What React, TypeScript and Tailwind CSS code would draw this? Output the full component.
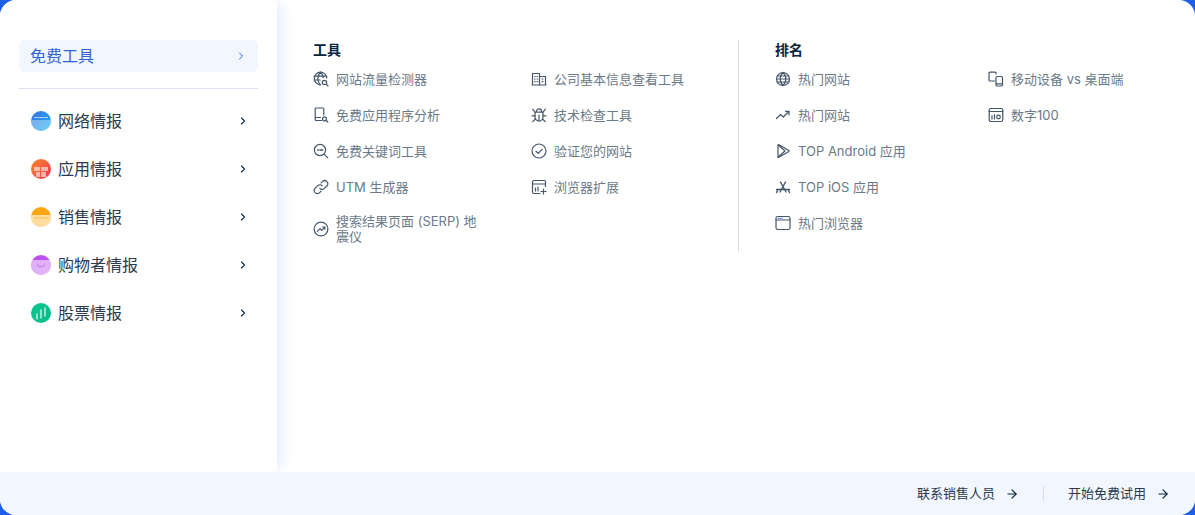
import React from "react";
import { ChevronRight, ArrowRight } from "lucide-react";

const S = ({ children }: { children: React.ReactNode }) => (
  <svg width="16" height="16" viewBox="0 0 16 16" fill="none" stroke="#44566a" strokeWidth="1.2" strokeLinecap="round" strokeLinejoin="round" className="shrink-0">
    {children}
  </svg>
);

const icons: Record<string, React.ReactNode> = {
  globeSearch: (<S><path d="M13.8 7A6.3 6.3 0 1 0 7 13.8" /><path d="M1.2 5.2h12M1.2 9h6M7.5 1.2C5.5 3 4.8 5.2 4.8 7.5s.7 4.5 2.7 6.3M7.5 1.2c1.7 1.5 2.5 3.4 2.7 5.5" /><circle cx="11.5" cy="11.5" r="2.2" /><path d="M13.2 13.2l1.8 1.8" /></S>),
  appSearch: (<S><path d="M8.5 13.5H3.2a1 1 0 0 1-1-1V2a1 1 0 0 1 1-1h6.6a1 1 0 0 1 1 1v6" /><path d="M2.5 10.5H7.5" /><circle cx="11.5" cy="11.8" r="2" /><path d="M13 13.3l1.8 1.7" /></S>),
  keyword: (<S><circle cx="7" cy="7" r="5.6" /><path d="M11.2 11.2l3.6 3.6" /><path d="M4.6 7h.6M6.8 7h3" strokeWidth="1.4" /></S>),
  link: (<S><path d="M6.8 9.4a3 3 0 0 0 4.4.2l2.6-2.6a3.1 3.1 0 0 0-4.4-4.4L8 3.9" /><path d="M9.2 6.8a3 3 0 0 0-4.4-.2L2.2 9.2a3.1 3.1 0 0 0 4.4 4.4l1.4-1.3" /></S>),
  serp: (<S><circle cx="8" cy="8" r="6.9" /><path d="M4.3 10.4l2.7-2.7 1.7 1.6 3-3.1" /><path d="M9.6 6h2.3v2.3" /></S>),
  building: (<S><path d="M1.5 14V2.5h7V14M8.5 5.5h6V14M1 14h14" /><path d="M3.6 5.5h.6M6 5.5h.6M3.6 8h.6M6 8h.6M3.6 10.6h.6M6 10.6h.6M11 8h1M11 10.6h1" /></S>),
  bug: (<S><path d="M5.4 4.5a2.6 2.6 0 0 1 5.2 0" /><path d="M5 5.2h6a1 1 0 0 1 1 1V10a4 4 0 0 1-8 0V6.2a1 1 0 0 1 1-1z" /><path d="M8 8v6M1.6 2.2l2.6 3.2M14.4 2.2l-2.6 3.2M1 8.8h3M15 8.8h-3M1.8 14.6L4.4 12M14.2 14.6L11.6 12" /></S>),
  check: (<S><circle cx="8" cy="8" r="7" /><path d="M5 8.2l2.2 2.1 3.9-4" /></S>),
  ext: (<S><path d="M14.5 7.5V3a1.5 1.5 0 0 0-1.5-1.5H3A1.5 1.5 0 0 0 1.500 3v10A1.500 1.500 0 0 0 3 14.500h6" /><path d="M1.500 5h13M4.500 12V9M7 12V8M12.500 10v5M10 12.500h5" /></S>),
  globe: (<S><circle cx="8" cy="8" r="6.500" /><path d="M1.500 8h13M2.300 5h11.400M2.300 11h11.400M8 1.500c-2 1.800-2.800 4-2.800 6.500s.8 4.700 2.800 6.500M8 1.500c2 1.800 2.800 4 2.800 6.500s-.8 4.700-2.800 6.500" /></S>),
  trend: (<S><path d="M1.500 11.500l4-4 2.800 2.500 5.500-5.500" /><path d="M10.500 4.300h3.500v3.500" /></S>),
  play: (<S><path d="M3 2.200v11.600a.6.600 0 0 0 .9.500l10-5.800a.6.600 0 0 0 0-1L3.900 1.700a.6.600 0 0 0-.9.500z" /><path d="M3.200 2l6.800 6-6.800 6" /></S>),
  appstore: (<S><path d="M5.500 3L11 13M10.500 3L5 13M1.500 10.500h13M1.500 13.500l1.500-3M14.500 13.500l-1.500-3" strokeWidth="1.400" /></S>),
  browser: (<S><rect x="1" y="1.500" width="14" height="13" rx="1.800" /><path d="M1 5h14" /><path d="M3.200 3.300h.4M5 3.300h.4M6.800 3.300h.4" stroke="#4a7de0" /></S>),
  device: (<S><path d="M8 3V2.200A1 1 0 0 0 7 1.200H2a1 1 0 0 0-1 1V9a1 1 0 0 0 1 1h4.500" /><rect x="8" y="5.500" width="6.500" height="9.500" rx="1.200" /><path d="M8 12.800h6.500" /></S>),
  top100: (<S><rect x="1.200" y="1.500" width="13.600" height="13" rx="1.800" /><path d="M1.200 4.500h13.600M4 12V8.500M6.500 12V7.500" /><circle cx="10.500" cy="10" r="1.800" /></S>),
};

const FF = "font-['Inter','Noto_Sans_CJK_SC',sans-serif]";

function Item({ icon, label, wide }: { icon: string; label: string; wide?: boolean }) {
  return (
    <a className="flex items-center gap-[7px] min-h-[36px] h-fit">
      {icons[icon]}
      <span className={`text-[13px] leading-[15px] text-[#6b7a88] ${wide ? "w-[150px]" : ""}`}>{label}</span>
    </a>
  );
}

const Dot = ({ c1, c2, children }: { c1: string; c2: string; children?: React.ReactNode }) => (
  <span className="w-5 h-5 rounded-full overflow-hidden shrink-0" style={{ background: `linear-gradient(135deg, ${c1}, ${c2})` }}>
    <svg width="20" height="20" viewBox="0 0 20 20">{children}</svg>
  </span>
);

const nav: { label: string; dot: React.ReactNode }[] = [
  {
    label: "网络情报",
    dot: (
      <Dot c1="#3f6fe8" c2="#18b6ee">
        <path d="M0 9h20v11H0z" fill="#ffffff" opacity=".35" />
        <path d="M3 6.500h14" stroke="#fff" strokeWidth="1" opacity=".6" />
      </Dot>
    ),
  },
  {
    label: "应用情报",
    dot: (
      <Dot c1="#fb8a2c" c2="#f0344f">
        <path d="M3 8h6v4H3zM10 8h7v4h-7zM5 13h4v5H5zM10 13h5v5h-5z" fill="#ffd9d0" opacity=".75" />
      </Dot>
    ),
  },
  {
    label: "销售情报",
    dot: (
      <Dot c1="#ffa712" c2="#ffa712">
        <path d="M0 8h20v12H0z" fill="#fff" opacity=".6" />
        <path d="M3 11h14" stroke="#ffa712" strokeWidth=".8" opacity=".7" />
      </Dot>
    ),
  },
  {
    label: "购物者情报",
    dot: (
      <Dot c1="#b94bef" c2="#c05cf0">
        <path d="M0 5h20v15H0z" fill="#fff" opacity=".55" />
        <path d="M6.500 8.500a3.500 3.500 0 0 0 7 0" stroke="#c77af0" fill="none" strokeWidth="1" />
      </Dot>
    ),
  },
  {
    label: "股票情报",
    dot: (
      <Dot c1="#0cc792" c2="#0cb98a">
        <path d="M6 11v5M10 7v8M14 5v8" stroke="#fff" strokeWidth="1.600" opacity=".7" strokeLinecap="round" />
      </Dot>
    ),
  },
];

export default function App() {
  return (
    <div className={`w-[1195px] h-[515px] bg-[#1f5fe8] ${FF}`}>
      <div className="w-full h-full rounded-[16px] bg-white overflow-hidden flex flex-col">
        <div className="flex-1 flex min-h-0">
          <aside className="w-[277px] shrink-0 bg-white pt-[40px] px-[19px] relative shadow-[6px_0_14px_-2px_#e4ebff]">
            <div className="h-[32px] rounded-[6px] bg-[#f2f6fe] flex items-center justify-between pl-[11px] pr-[11px] text-[16px] text-[#2f63d6]">
              <span>免费工具</span>
              <ChevronRight size={12} strokeWidth={2} className="text-[#2f63d6]" />
            </div>
            <div className="h-px bg-[#d9e1f0] mt-[16px] mb-[8px]" />
            <ul>
              {nav.map((n) => (
                <li key={n.label} className="h-[48px] flex items-center pl-[12px] pr-[9px] text-[16px] text-[#2a3b4d]">
                  {n.dot}
                  <span className="ml-[7px] flex-1">{n.label}</span>
                  <ChevronRight size={12} strokeWidth={2.200} className="text-[#092540]" />
                </li>
              ))}
            </ul>
          </aside>
          <main className="flex-1 pt-[40px] pl-[36px] flex items-start">
            <section className="w-[426px] h-[212px] border-r border-[#d5dee9]">
              <h3 className="text-[14px] leading-[20px] font-semibold text-[#092540] mb-[1px]">工具</h3>
              <div className="grid grid-cols-[218px_1fr] auto-rows-min">
                <Item icon="globeSearch" label="网站流量检测器" />
                <Item icon="building" label="公司基本信息查看工具" />
                <Item icon="appSearch" label="免费应用程序分析" />
                <Item icon="bug" label="技术检查工具" />
                <Item icon="keyword" label="免费关键词工具" />
                <Item icon="check" label="验证您的网站" />
                <Item icon="link" label="UTM 生成器" />
                <Item icon="ext" label="浏览器扩展" />
                <div className="pt-[6px]">
                  <Item icon="serp" label="搜索结果页面 (SERP) 地震仪" wide />
                </div>
              </div>
            </section>
            <section className="pl-[36px] flex-1">
              <h3 className="text-[14px] leading-[20px] font-semibold text-[#092540] mb-[1px]">排名</h3>
              <div className="grid grid-cols-[213px_1fr] auto-rows-min">
                <Item icon="globe" label="热门网站" />
                <Item icon="device" label="移动设备 vs 桌面端" />
                <Item icon="trend" label="热门网站" />
                <Item icon="top100" label="数字100" />
                <Item icon="play" label="TOP Android 应用" />
                <div />
                <Item icon="appstore" label="TOP iOS 应用" />
                <div />
                <Item icon="browser" label="热门浏览器" />
              </div>
            </section>
          </main>
        </div>
        <footer className="relative z-10 h-[43px] shrink-0 bg-[#f2f6fe] flex items-center justify-end pr-[25px] text-[13px] text-[#2a3b4d]">
          <span>联系销售人员</span>
          <ArrowRight size={14} strokeWidth={2} className="ml-[10px] text-[#092540]" />
          <span className="w-px h-[15px] bg-[#d5dee9] mx-[24px]" />
          <span>开始免费试用</span>
          <ArrowRight size={14} strokeWidth={2} className="ml-[10px] text-[#092540]" />
        </footer>
      </div>
    </div>
  );
}
